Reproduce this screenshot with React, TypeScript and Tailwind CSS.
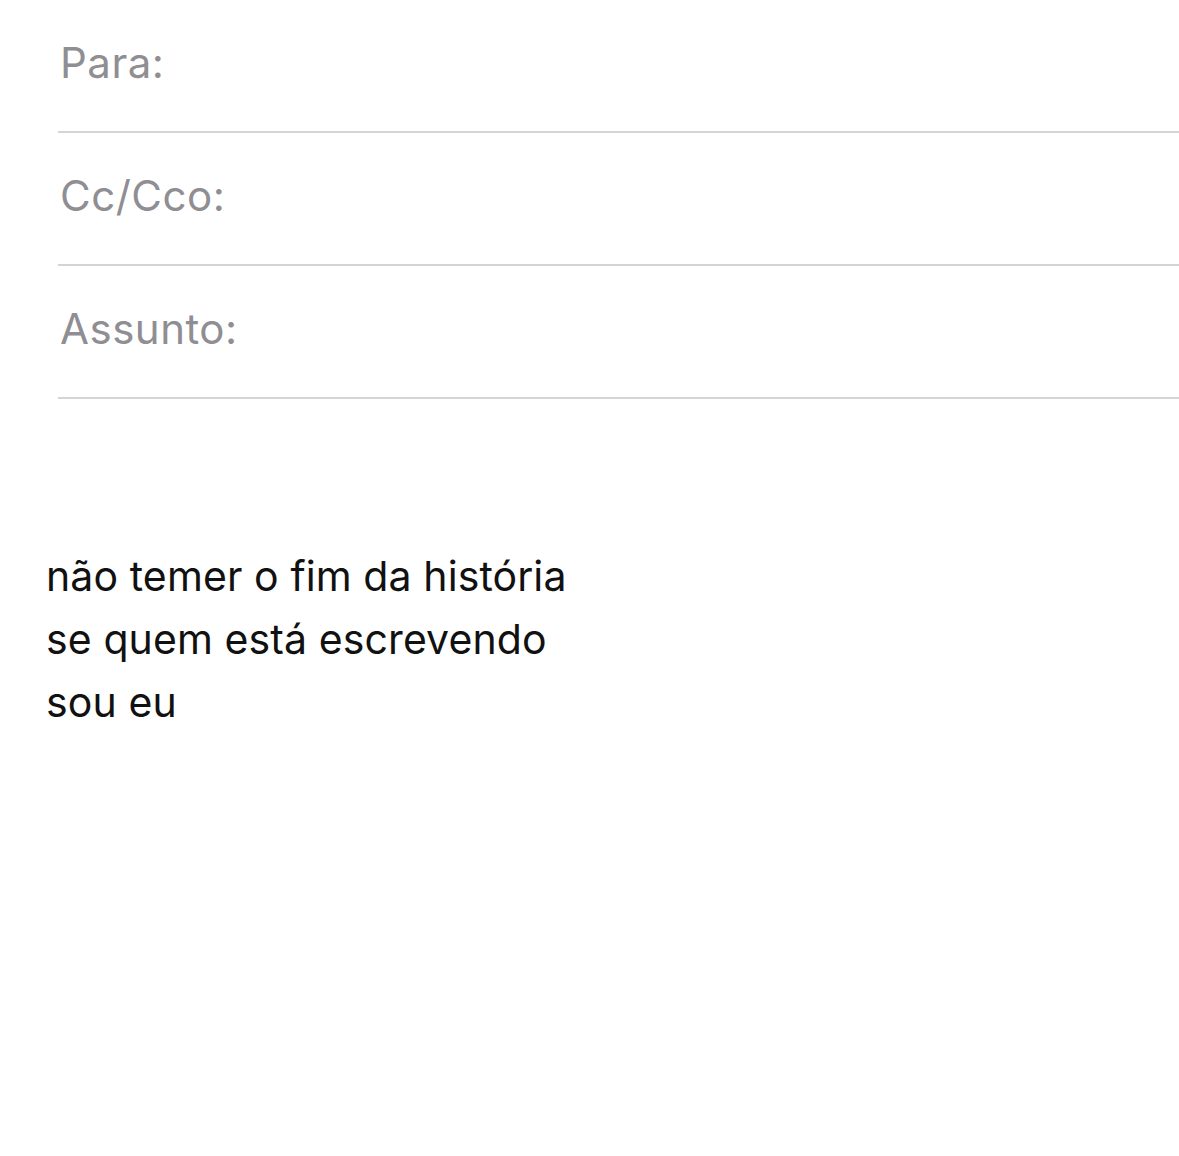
import React from 'react';

const fields = ['Para:', 'Cc/Cco:', 'Assunto:'];

const lines = ['não temer o fim da história', 'se quem está escrevendo', 'sou eu'];

export default function App() {
  return (
    <div
      className="w-[1179px] h-[1156px] bg-white overflow-hidden"
      style={{ fontFamily: 'Inter, "Liberation Sans", Arial, sans-serif' }}
    >
      <div className="pl-[58px]">
        {fields.map((f) => (
          <div key={f} className="h-[133px] flex items-center border-b-2 border-[#d4d4d6] pl-[2px] pb-[5px]">
            <span className="text-[42px] tracking-[0.5px] text-[#8e8e93] leading-none">{f}</span>
          </div>
        ))}
      </div>
      <div className="pl-[46px] pt-[146px]">
        {lines.map((l) => (
          <div key={l} className="text-[41px] tracking-[0.1px] leading-[63px] text-[#111111]">
            {l}
          </div>
        ))}
      </div>
    </div>
  );
}
